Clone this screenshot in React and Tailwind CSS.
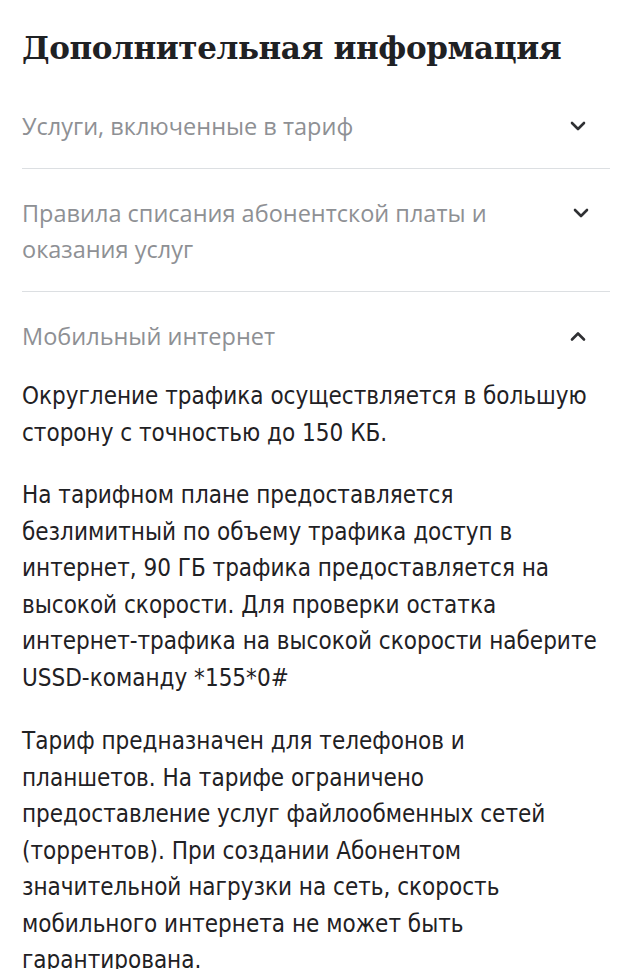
import React from 'react';

const Chevron = ({ up }) => (
  <svg width="18" height="12" viewBox="0 0 18 12" className="shrink-0">
    <path
      d={up ? 'M3 9.5 L9 3.5 L15 9.5' : 'M3 3 L9 9 L15 3'}
      fill="none"
      stroke="#2f3033"
      strokeWidth="2.6"
      strokeLinecap="round"
      strokeLinejoin="round"
    />
  </svg>
);

const Item = ({ title, open, children, last }) => (
  <div className={last ? '' : 'border-b border-[#dcdfe2]'}>
    <div className="flex items-start justify-between pt-[26px] pb-[24px]">
      <p className="text-[23.5px] leading-[36px] text-[#8e9094] font-['Open_Sans',sans-serif] pr-6">{title}</p>
      <div className="w-[36px] h-[36px] flex items-center justify-center mr-[14px]">
        <Chevron up={open} />
      </div>
    </div>
    {children}
  </div>
);

export default function App() {
  const body = "font-['DejaVu_Sans_Condensed','Roboto',sans-serif] text-[24px] leading-[36.5px] text-[#1f2124] -mr-[20px]";
  return (
    <div className="w-[640px] min-h-[969px] bg-white pl-[22px] pr-[30px] pt-[26px] overflow-hidden">
      <h2 className="font-['DejaVu_Serif',serif] font-bold text-[31px] leading-[44px] text-[#1f2124] tracking-[-0.4px] pb-[12px]">
        Дополнительная информация
      </h2>

      <Item title="Услуги, включенные в тариф" />
      <Item title="Правила списания абонентской платы и оказания услуг" />
      <Item title="Мобильный интернет" open last>
        <div className={body}>
          <p className="mb-[26px]">
            Округление трафика осуществляется в большую<br />
            сторону с точностью до 150 КБ.
          </p>
          <p className="mb-[27px]">
            На тарифном плане предоставляется<br />
            безлимитный по объему трафика доступ в<br />
            интернет, 90 ГБ трафика предоставляется на<br />
            высокой скорости. Для проверки остатка<br />
            интернет-трафика на высокой скорости наберите<br />
            USSD-команду *155*0#
          </p>
          <p>
            Тариф предназначен для телефонов и<br />
            планшетов. На тарифе ограничено<br />
            предоставление услуг файлообменных сетей<br />
            (торрентов). При создании Абонентом<br />
            значительной нагрузки на сеть, скорость<br />
            мобильного интернета не может быть<br />
            гарантирована.
          </p>
        </div>
      </Item>
    </div>
  );
}
